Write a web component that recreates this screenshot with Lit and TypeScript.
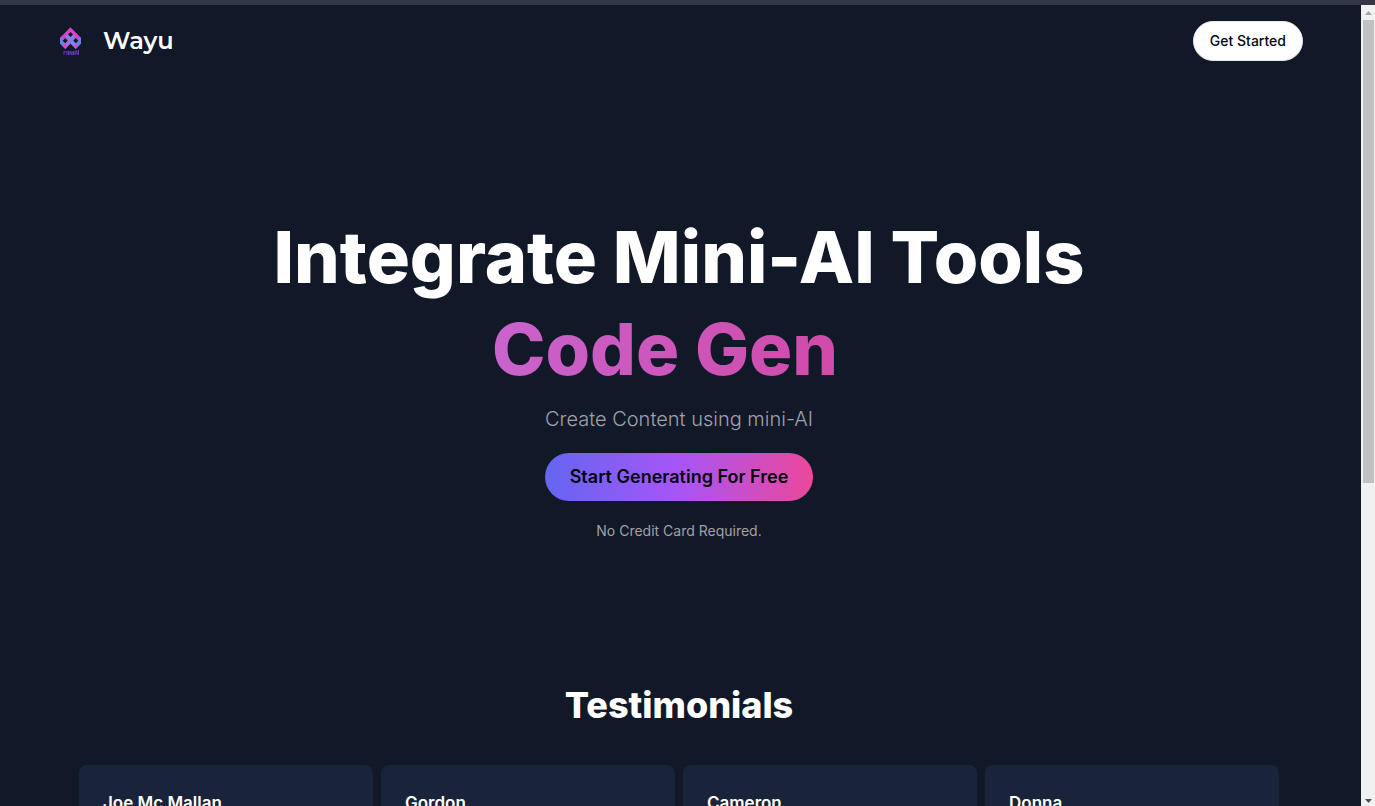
import { LitElement, html, css } from "lit";
import { customElement } from "lit/decorators.js";

const people = ["Joe Mc Mallan", "Gordon", "Cameron", "Donna"];

@customElement("app-root")
export class AppRoot extends LitElement {
  static styles = css`
    :host {
      display: grid;
      grid-template-rows: 5px 1fr;
      height: 100vh;
      overflow: hidden;
      background: #111827;
      color: #fff;
      font-family: Inter, "Liberation Sans", sans-serif;
    }
    * { box-sizing: border-box; }
    h1, h2, h3, p { margin: 0; }
    a { color: inherit; text-decoration: none; }
    button { border: 0; font-family: inherit; cursor: pointer; }
    .window-edge { background: #333544; }
    .frame {
      display: grid;
      grid-template-columns: 1fr 14px;
      min-height: 0;
    }
    .page {
      overflow: hidden;
      padding-right: 3px;
    }
    .container {
      max-width: 1280px;
      margin: 0 auto;
    }
    .nav {
      display: flex;
      align-items: center;
      justify-content: space-between;
      padding: 16px;
    }
    .brand {
      display: flex;
      align-items: center;
      gap: 16px;
      font-family: Montserrat, Inter, sans-serif;
      font-size: 24px;
      line-height: 32px;
      font-weight: 600;
    }
    .logo { width: 32px; height: 32px; display: block; }
    .started {
      height: 40px;
      padding: 0 16px;
      border: 1px solid #e2e8f0;
      border-radius: 20px;
      background: #fff;
      color: #020817;
      font-size: 14px;
      line-height: 20px;
      font-weight: 500;
    }
    .hero {
      display: flex;
      flex-direction: column;
      align-items: center;
      gap: 20px;
      padding: 144px 0;
      text-align: center;
    }
    .title {
      align-self: stretch;
      display: flex;
      flex-direction: column;
      gap: 20px;
      font-size: 72px;
      line-height: 72px;
      font-weight: 800;
    }
    .typed {
      padding-right: 28px;
      background: linear-gradient(to right, #c084fc, #db2777);
      -webkit-background-clip: text;
      background-clip: text;
      color: transparent;
    }
    .lead {
      font-size: 20px;
      line-height: 28px;
      font-weight: 300;
      color: #a1a1aa;
    }
    .cta {
      height: 48px;
      padding: 0 25px;
      border-radius: 24px;
      background: linear-gradient(to right, #6366f1, #a855f7, #ec4899);
      color: #04020c;
      font-size: 18px;
      line-height: 28px;
      font-weight: 600;
    }
    .note {
      font-size: 14px;
      line-height: 20px;
      color: #a1a1aa;
    }
    .testimonials { padding: 0 40px 80px; }
    .heading {
      margin-bottom: 40px;
      text-align: center;
      font-size: 36px;
      line-height: 40px;
      font-weight: 800;
    }
    .cards {
      display: grid;
      grid-template-columns: repeat(4, 1fr);
      gap: 8px;
    }
    .card {
      min-height: 192px;
      padding: 24px;
      border-radius: 8px;
      background: #192339;
    }
    .name {
      font-size: 17px;
      line-height: 28px;
      font-weight: 600;
    }
    .scrollbar {
      display: flex;
      flex-direction: column;
      background: #f1f1f1;
    }
    .arrow { display: block; width: 14px; height: 15px; }
    .track { flex: 1; padding: 0 1px 0 2px; }
    .thumb { height: 60%; background: #c1c1c1; }
  `;

  render() {
    return html`
      <div class="window-edge"></div>
      <div class="frame">
        <div class="page">
          <header class="container nav">
            <a class="brand" href="#">
              <svg class="logo" viewBox="0 0 32 32" aria-hidden="true">
                <path d="M15.500 2.500L26 13V18.500L20.800 24L15.500 18.800L10.200 24L5 18.500V13Z" fill="#a75fd8" />
                <path d="M15.500 2.500L26 13L23.500 14.500L20.800 12L19 13.500L15.500 8L12 13.500L10.200 12L7.500 14.500L5 13Z" fill="#de3fc4" />
                <path d="M5 13L7.500 12.500L8 16L11 19.500L9 22.500L5 18.500Z" fill="#5d84ea" />
                <path d="M26 13L23.500 12.500L23 16L20 19.500L22 22.500L26 18.500Z" fill="#5d84ea" />
                <path d="M10.500 11.500L12.500 9L22 20L20.500 23.500Z" fill="#718be8" />
                <path d="M18.500 9L20.500 11.500L10.500 23.500L9 20Z" fill="#9478df" />
                <path d="M8 20L10 18.500L12 22L10.200 24ZM23 20L21 18.500L19 22L20.800 24Z" fill="#de45c5" />
                <path d="M15.500 7L18 9.500L15.500 12L13 9.500ZM10.200 13L12.700 15.700L10.200 18.300L7.700 15.700ZM20.800 13L23.300 15.700L20.800 18.300L18.300 15.700Z" fill="#111827" />
                <g fill="none" stroke="#6938bd" stroke-width="1">
                  <path d="M9 30V26L10.500 27L12 26V30M13.500 26V30M15 30V26L17 30V26M18.500 26V30M20 30V26H22V30M20 28H22M23.500 25V30" />
                </g>
              </svg>
              <span>Wayu</span>
            </a>
            <button class="started">Get Started</button>
          </header>
          <main class="container">
            <section class="hero">
              <h1 class="title">
                <span>Integrate Mini-AI Tools</span>
                <span class="typed">Code Gen</span>
              </h1>
              <p class="lead">Create Content using mini-AI</p>
              <button class="cta">Start Generating For Free</button>
              <p class="note">No Credit Card Required.</p>
            </section>
            <section class="testimonials">
              <h2 class="heading">Testimonials</h2>
              <div class="cards">
                ${people.map((name) => html`<article class="card"><h3 class="name">${name}</h3></article>`)}
              </div>
            </section>
          </main>
        </div>
        <div class="scrollbar" aria-hidden="true">
          <svg class="arrow" viewBox="0 0 14 15"><path d="M4 10L7.500 6L11 10Z" fill="#a3a3a3" /></svg>
          <div class="track"><div class="thumb"></div></div>
          <svg class="arrow" viewBox="0 0 14 15"><path d="M4 8L7.500 12L11 8Z" fill="#505050" /></svg>
        </div>
      </div>
    `;
  }
}
